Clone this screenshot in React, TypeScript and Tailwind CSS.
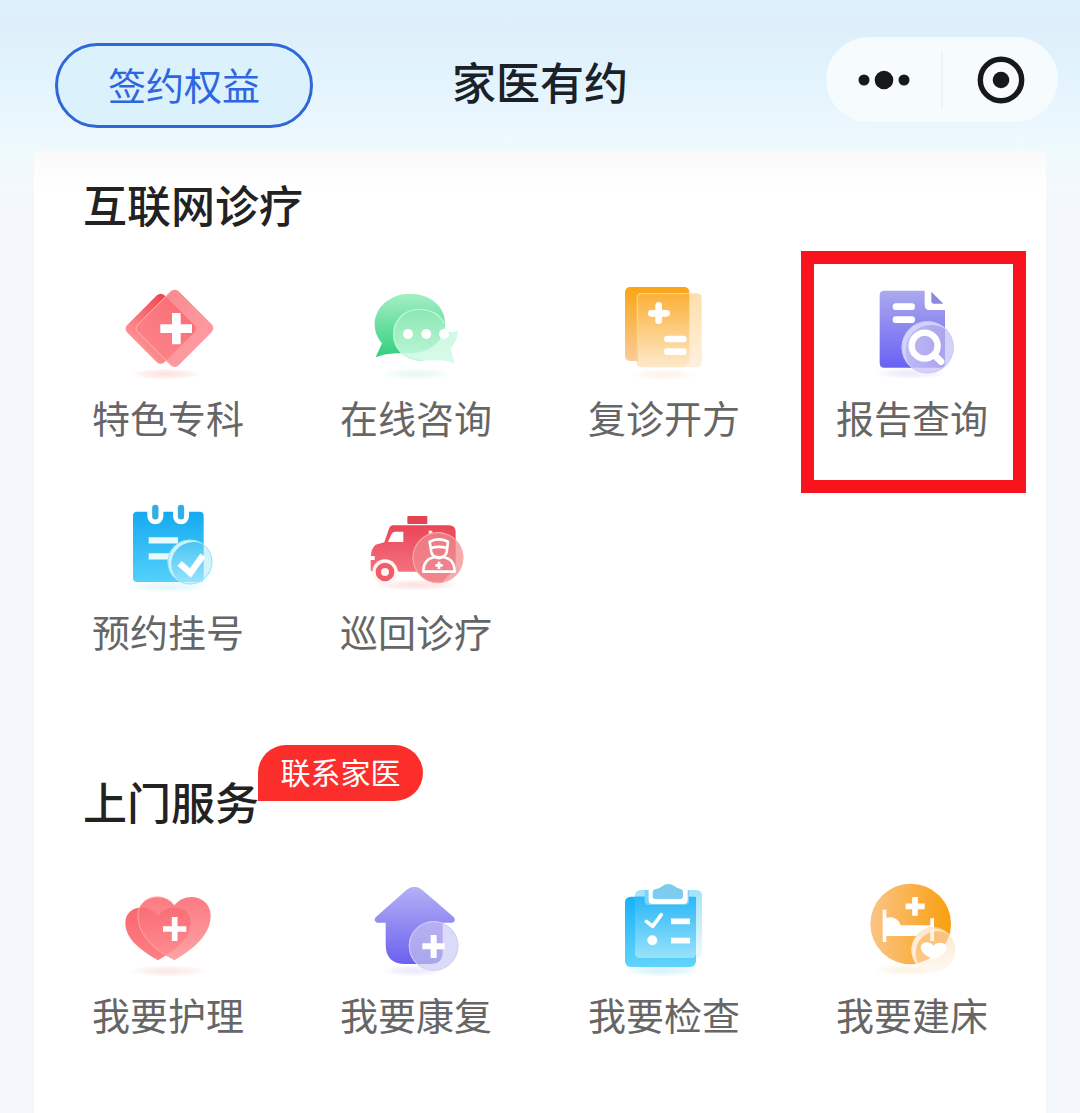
import type { ReactNode } from "react";

type Service = { label: string; icon: ReactNode; highlighted?: boolean };

function Icon({ box, children }: { box: string; children: ReactNode }) {
  return (
    <svg viewBox={box} className="h-[100px] w-[120px]" aria-hidden="true">
      {children}
    </svg>
  );
}

function Gradient({ id, from, to, flat }: { id: string; from: string; to: string; flat?: boolean }) {
  return (
    <linearGradient id={id} x1="0" y1="0" x2={flat ? "1" : "0"} y2={flat ? "0" : "1"}>
      <stop offset="0" stopColor={from} />
      <stop offset="1" stopColor={to} />
    </linearGradient>
  );
}

function Shadow({ id, cx, cy, color, rx = 105 }: { id: string; cx: number; cy: number; color: string; rx?: number }) {
  return (
    <>
      <defs>
        <radialGradient id={id}>
          <stop offset="0" stopColor={color} stopOpacity="0.8" />
          <stop offset="0.6" stopColor={color} stopOpacity="0.45" />
          <stop offset="1" stopColor={color} stopOpacity="0" />
        </radialGradient>
      </defs>
      <ellipse cx={cx} cy={cy} rx={rx} ry="17" fill={`url(#${id})`} />
    </>
  );
}

const specialty = (
  <Icon box="24 30 360 300">
    <defs>
      <Gradient id="spA" from="#ee4650" to="#ff8f92" />
      <Gradient id="spB" from="#f98c92" to="#fd9a9f" flat />
      <Gradient id="spC" from="#fb6b73" to="#fb8288" />
      <clipPath id="spClip">
        <rect x="103" y="97" width="158" height="158" rx="16" transform="rotate(45 182 176)" />
      </clipPath>
    </defs>
    <Shadow id="spS" cx={198} cy={312} color="#fcd9d6" />
    <rect x="103" y="97" width="158" height="158" rx="16" transform="rotate(45 182 176)" fill="url(#spA)" />
    <rect x="137" y="88" width="174" height="174" rx="17" transform="rotate(45 224 175)" fill="url(#spB)" />
    <g clipPath="url(#spClip)">
      <rect x="137" y="88" width="174" height="174" rx="17" transform="rotate(45 224 175)" fill="url(#spC)" />
    </g>
    <path d="M213 64 L113 164 Q103 175 113 186 L213 286" fill="none" stroke="#ffb3ab" strokeWidth="3" />
    <path d="M216 129h26v34h34v26h-34v34h-26v-34h-35v-26h35z" fill="#fff" />
  </Icon>
);

const chat = (
  <Icon box="18 30 360 300">
    <defs>
      <Gradient id="chA" from="#a5efc5" to="#31cf7d" />
      <Gradient id="chB" from="#8ce7b4" to="#bdf6d7" />
      <Gradient id="chC" from="#c9f5df" to="#d8fbea" />
      <clipPath id="chClip">
        <path d="M180 71c58 0 105 36 105 88s-43 89-101 91c-38 0-69-4-107 12l19-42c-14-16-22-35-22-57 0-52 48-92 106-92z" />
      </clipPath>
    </defs>
    <Shadow id="chS" cx={198} cy={312} color="#dff7ea" />
    <path d="M180 71c58 0 105 36 105 88s-43 89-101 91c-38 0-69-4-107 12l19-42c-14-16-22-35-22-57 0-52 48-92 106-92z" fill="url(#chA)" />
    <path d="M207 118c38 0 66 20 78 56 14 18 28 14 37 7 3 22-7 39-20 55l12 46c-30-16-55-10-95-10-53-2-88-36-88-78s31-76 76-76z" fill="url(#chC)" />
    <g clipPath="url(#chClip)">
      <path d="M207 118c45 0 80 32 80 76s-35 76-80 76-76-32-76-76 31-76 76-76z" fill="url(#chB)" />
    </g>
    <path d="M284 162c-12-28-42-44-77-44-45 0-76 34-76 76s35 76 88 78" fill="none" stroke="#b9fad5" strokeWidth="4" />
    <circle cx="174" cy="192" r="15" fill="#fff" />
    <circle cx="229" cy="192" r="15" fill="#fff" />
    <circle cx="282" cy="192" r="15" fill="#fff" />
  </Icon>
);

const prescription = (
  <Icon box="12 30 360 300">
    <defs>
      <Gradient id="rxA" from="#f9a514" to="#fbcb98" />
      <Gradient id="rxB" from="#fddfad" to="#fef0df" />
      <Gradient id="rxC" from="#fbb037" to="#fdeacb" />
    </defs>
    <Shadow id="rxS" cx={192} cy={314} color="#fdf0e2" />
    <rect x="75" y="51" width="193" height="222" rx="15" fill="url(#rxA)" />
    <rect x="111" y="70" width="194" height="222" rx="13" fill="url(#rxB)" />
    <path d="M124 70h144v203q-2 10-14 19H124q-13 0-13-13V83q0-13 13-13z" fill="url(#rxC)" />
    <path d="M112 276V84q0-13 13-13h143" fill="none" stroke="#ffd27b" strokeWidth="4" />
    <path d="M176 106v46M154 130h46" stroke="#fff" strokeWidth="20" strokeLinecap="round" />
    <path d="M202 207h48M202 245h48" stroke="#fff" strokeWidth="20" strokeLinecap="round" />
  </Icon>
);

const report = (
  <Icon box="6 30 360 300">
    <defs>
      <Gradient id="rpA" from="#aba9ee" to="#6962f3" />
      <Gradient id="rpB" from="#bdbaf6" to="#aaa4ed" flat />
    </defs>
    <Shadow id="rpS" cx={180} cy={310} color="#e6e4fa" />
    <path d="M103 62h121v43q0 15 15 15h46v158q0 15-15 15H103q-14 0-14-15V76q0-14 14-14z" fill="url(#rpA)" />
    <path d="M244 65l36 36h-29q-7 0-7-7z" fill="#8c88df" />
    <path d="M138 110h47M138 149h47" stroke="#fff" strokeWidth="20" strokeLinecap="round" />
    <circle cx="233" cy="232" r="78" fill="#d5d2fa" />
    <path d="M285 176v102q0 15-15 15h-85a78 78 0 0 1 100-117z" fill="url(#rpB)" />
    <circle cx="233" cy="232" r="77" fill="none" stroke="#cbc7fb" strokeWidth="3" />
    <circle cx="224" cy="227" r="39" fill="none" stroke="#fff" strokeWidth="19" />
    <path d="M255 257l18 18" stroke="#fff" strokeWidth="20" strokeLinecap="round" />
  </Icon>
);

const booking = (
  <Icon box="24 12 360 300">
    <defs>
      <Gradient id="bkA" from="#15a9f0" to="#54d1fb" />
      <Gradient id="bkB" from="#4bc4f3" to="#95e3fd" />
    </defs>
    <Shadow id="bkS" cx={205} cy={290} color="#d9f5fb" rx={125} />
    <path d="M111 65h31v14a24 24 0 0 0 48 0V65h29v14a24 24 0 0 0 48 0V65h32q12 0 12 12v187q0 12-12 12H111q-12 0-12-12V77q0-12 12-12z" fill="url(#bkA)" />
    <path d="M166 54v25M243 54v25" stroke="#31aee2" strokeWidth="19" strokeLinecap="round" />
    <path d="M146 151h88M146 199h88" stroke="#e9faff" strokeWidth="19" />
    <circle cx="270" cy="216" r="67" fill="#d2f3fd" />
    <path d="M311 163v101q0 12-12 12h-59a67 67 0 0 1 71-113z" fill="url(#bkB)" />
    <circle cx="270" cy="216" r="66" fill="none" stroke="#8ce8fb" strokeWidth="3" />
    <path d="M239 220l32 29 38-53" fill="none" stroke="#fff" strokeWidth="19" />
  </Icon>
);

const ambulance = (
  <Icon box="18 12 360 300">
    <defs>
      <Gradient id="amA" from="#eb4558" to="#f3727d" />
      <Gradient id="amB" from="#ed7983" to="#f3868d" />
    </defs>
    <Shadow id="amS" cx={200} cy={285} color="#fbdad8" rx={130} />
    <rect x="172" y="78" width="60" height="24" rx="3" fill="#e44355" />
    <path d="M129 106h168q20 0 20 20v119H146a42 42 0 0 0-76 0q-8 0-8-8v-27h12v-12H63q0-22 14-34l26-7 13-38q4-13 13-13z" fill="url(#amA)" />
    <path d="M136 125h24v31h-46l11-25q3-6 11-6z" fill="#fff" />
    <path d="M236 122h11v12h-11z" fill="#ffe4e0" />
    <circle cx="105" cy="246" r="38" fill="#fff4f2" />
    <circle cx="105" cy="246" r="20" fill="none" stroke="#ee5d69" strokeWidth="16" />
    <circle cx="264" cy="203" r="76" fill="#f7aaad" />
    <path d="M317 149v96h-12l-30 34a76 76 0 1 1 42-130z" fill="url(#amB)" />
    <circle cx="264" cy="203" r="75" fill="none" stroke="#ffaeac" strokeWidth="3" />
    <path d="M239 155q26-14 55 0l-4 31q-3 16-23 16t-23-16zM243 174q24-7 48 0" fill="none" stroke="#fff" strokeWidth="8" strokeLinejoin="round" />
    <path d="M220 245q0-39 36-44 11 7 22 0 36 5 36 44z" fill="none" stroke="#fff" strokeWidth="8" strokeLinejoin="round" />
    <path d="M267 215v22M256 226h22" stroke="#fff" strokeWidth="8" />
  </Icon>
);

const nursing = (
  <Icon box="24 21 360 300">
    <defs>
      <Gradient id="nuA" from="#fb676e" to="#fb8085" />
      <Gradient id="nuB" from="#fb7b80" to="#fca3a7" />
      <Gradient id="nuC" from="#fa6671" to="#fd8f93" />
      <clipPath id="nuClip">
        <path d="M174 271C110 234 76 200 76 158c0-46 62-64 98-21 36-43 98-25 98 21 0 42-34 76-98 113z" />
      </clipPath>
    </defs>
    <Shadow id="nuS" cx={204} cy={303} color="#fce1e1" rx={120} />
    <path d="M174 271C110 234 76 200 76 158c0-46 62-64 98-21 36-43 98-25 98 21 0 42-34 76-98 113z" fill="url(#nuA)" />
    <path d="M223 271C152 230 114 187 114 136c0-57 75-75 109-30 34-45 109-27 109 30 0 51-38 94-109 135z" fill="url(#nuB)" />
    <g clipPath="url(#nuClip)">
      <path d="M223 271C152 230 114 187 114 136c0-57 75-75 109-30 34-45 109-27 109 30 0 51-38 94-109 135z" fill="url(#nuC)" />
    </g>
    <path d="M223 106C189 61 114 79 114 136c0 51 38 94 89 123" fill="none" stroke="#ffa7a4" strokeWidth="3" />
    <path d="M224 141v72M189 177h70" stroke="#fff" strokeWidth="17" />
  </Icon>
);

const rehab = (
  <Icon box="768 21 360 300">
    <defs>
      <Gradient id="rhA" from="#b5b0f5" to="#6a61ef" />
      <Gradient id="rhB" from="#b7b0f3" to="#aaa6ec" />
    </defs>
    <Shadow id="rhS" cx={940} cy={302} color="#e5e4fb" rx={95} />
    <path d="M920 59q23-17 46 0l95 82q10 14-6 17h-27v88q0 36-36 36h-81q-54-4-54-58v-66h-26q-12-5-4-16z" fill="url(#rhA)" />
    <circle cx="1001" cy="228" r="74" fill="#dcdaf9" />
    <path d="M1028 159v87q0 36-36 36h-42a74 74 0 0 1 78-123z" fill="url(#rhB)" />
    <circle cx="1001" cy="228" r="73" fill="none" stroke="#d2cdfc" strokeWidth="3" />
    <path d="M1001 195v69M967 229h67" stroke="#fff" strokeWidth="18" />
  </Icon>
);

const checkup = (
  <Icon box="12 21 360 300">
    <defs>
      <Gradient id="ckA" from="#16b2fb" to="#62d4fc" />
      <Gradient id="ckB" from="#a2e2f9" to="#edfaff" />
      <Gradient id="ckC" from="#29b7f7" to="#99e2fb" />
    </defs>
    <Shadow id="ckS" cx={185} cy={302} color="#c7f0fc" rx={115} />
    <rect x="105" y="60" width="201" height="204" rx="16" fill="url(#ckB)" />
    <rect x="75" y="80" width="213" height="211" rx="17" fill="url(#ckA)" />
    <path d="M105 80h183v170q0 14-14 14H119q-14 0-14-14z" fill="url(#ckC)" />
    <path d="M134 60h133v33q0 12-12 12H146q-12 0-12-12z" fill="#7bd3f6" />
    <path d="M146 58v33q0 11 11 11h95q11 0 11-11V58z" fill="#fff" />
    <path d="M171 56q10-1 15-7 19-14 38 0 6 6 15 7 10 2 10 11v12q0 8-8 8h-75q-8 0-8-8V67q0-9 13-11z" fill="#7dccef" />
    <path d="M139 154l19 15 26-35" fill="none" stroke="#fff" strokeWidth="11" strokeLinecap="round" strokeLinejoin="round" />
    <circle cx="157" cy="211" r="15" fill="#fff" />
    <path d="M213 154h57M213 212h57" stroke="#fff" strokeWidth="17" />
  </Icon>
);

const homeBed = (
  <Icon box="756 21 360 300">
    <defs>
      <Gradient id="hbA" from="#fbc486" to="#fa9f0d" flat />
      <Gradient id="hbB" from="#fac27b" to="#fcca87" />
      <Gradient id="hbC" from="#fde7cb" to="#fff9f2" />
    </defs>
    <Shadow id="hbS" cx={925} cy={300} color="#fdeedb" />
    <circle cx="932" cy="162" r="121" fill="url(#hbA)" />
    <path d="M945 81v56M917 109h57" stroke="#fff" strokeWidth="17" />
    <path d="M848 119h11v24q24-6 38 12l5 11h89v-21h11v70h-11v-17H859v18h-11z" fill="#fff" />
    <circle cx="1000" cy="240" r="66" fill="url(#hbC)" />
    <path d="M1048 194q-12 40-47 65-22 14-47 21a66 66 0 0 1 94-86z" fill="url(#hbB)" />
    <path d="M954 280a62 62 0 0 1 92-88" fill="none" stroke="#ffddb0" strokeWidth="2" />
    <path d="M1000 268c-50-20-43-50-20-51 10 0 16 4 20 10 4-6 12-9 21-9 27 2 30 32-21 50z" fill="#fff" />
    <path d="M991 178h11v35h-11z" fill="#fff3e2" />
  </Icon>
);

const onlineServices: Service[] = [
  { label: "特色专科", icon: specialty },
  { label: "在线咨询", icon: chat },
  { label: "复诊开方", icon: prescription },
  { label: "报告查询", icon: report, highlighted: true },
  { label: "预约挂号", icon: booking },
  { label: "巡回诊疗", icon: ambulance },
];

const homeServices: Service[] = [
  { label: "我要护理", icon: nursing },
  { label: "我要康复", icon: rehab },
  { label: "我要检查", icon: checkup },
  { label: "我要建床", icon: homeBed },
];

function ServiceGrid({ items }: { items: Service[] }) {
  return (
    <div className="mt-[46px] grid grid-cols-4 gap-y-[49px]">
      {items.map((item) => (
        <div key={item.label} className="relative flex justify-center">
          <button type="button" className="flex flex-col items-center gap-[9px]">
            {item.icon}
            <span className="text-[38px] leading-[56px] whitespace-nowrap text-[#666666]">{item.label}</span>
          </button>
          {item.highlighted && (
            <div className="pointer-events-none absolute -top-[29px] right-[10px] -bottom-[48px] left-[13px] border-[13px] border-[#f8131d]" />
          )}
        </div>
      ))}
    </div>
  );
}

export default function App() {
  return (
    <div className="min-h-screen bg-[#f4f8fc] bg-[linear-gradient(#def0fd_0px,#deeffa_30px,#e1f3fd_70px,#e9f6fe_115px,#effafd_150px,#f4f8fc_200px)] font-['Noto_Sans_CJK_SC',sans-serif]">
      <header className="grid grid-cols-[1fr_auto_1fr] items-start px-[22px] pt-[37px] pb-[22px]">
        <button
          type="button"
          className="mt-[6px] ml-[33px] h-[85px] w-[258px] justify-self-start rounded-full border-[3px] border-[#2f67d8] bg-[#dbf1fc] pb-1 text-[38px] leading-[56px] text-[#2e65e0]"
        >
          签约权益
        </button>
        <h1 className="mt-[14px] text-[44px] leading-[60px] font-medium text-[#1b2227]">家医有约</h1>
        <div className="flex h-[85px] w-[232px] items-center justify-self-end rounded-full bg-[#f6fbfe]">
          <button type="button" aria-label="更多" className="flex h-full flex-1 items-center justify-center">
            <svg viewBox="0 0 52 20" className="h-5 w-[52px]" fill="#17181b" aria-hidden="true">
              <circle cx="6" cy="10" r="5.5" />
              <circle cx="26" cy="10" r="9.3" />
              <circle cx="46" cy="10" r="5.5" />
            </svg>
          </button>
          <span className="h-[58px] w-[2px] bg-[#eff4f7]" />
          <button type="button" aria-label="关闭" className="flex h-full flex-1 items-center justify-center">
            <svg viewBox="0 0 48 48" className="size-12" aria-hidden="true">
              <circle cx="24" cy="24" r="20.7" fill="none" stroke="#17181b" strokeWidth="5.4" />
              <circle cx="24" cy="24" r="8.3" fill="#17181b" />
            </svg>
          </button>
        </div>
      </header>

      <main className="mx-[34px] rounded-t-lg bg-white bg-[linear-gradient(#faf9fa_0px,#fdfdfd_20px,#ffffff_45px)] px-[10px] pt-6 pb-[71px]">
        <section>
          <h2 className="pl-[39px] text-[44px] leading-[60px] font-medium text-[#222222]">互联网诊疗</h2>
          <ServiceGrid items={onlineServices} />
        </section>
        <section className="mt-28">
          <div className="flex pl-[39px]">
            <h2 className="text-[44px] leading-[60px] font-medium text-[#222222]">上门服务</h2>
            <div className="relative">
              <button
                type="button"
                className="absolute -top-[26px] -left-px h-14 w-[165px] rounded-[28px] rounded-bl-none bg-[#fb2e2b] pb-1 text-[30px] leading-[52px] whitespace-nowrap text-white"
              >
                联系家医
              </button>
            </div>
          </div>
          <ServiceGrid items={homeServices} />
        </section>
      </main>
    </div>
  );
}
